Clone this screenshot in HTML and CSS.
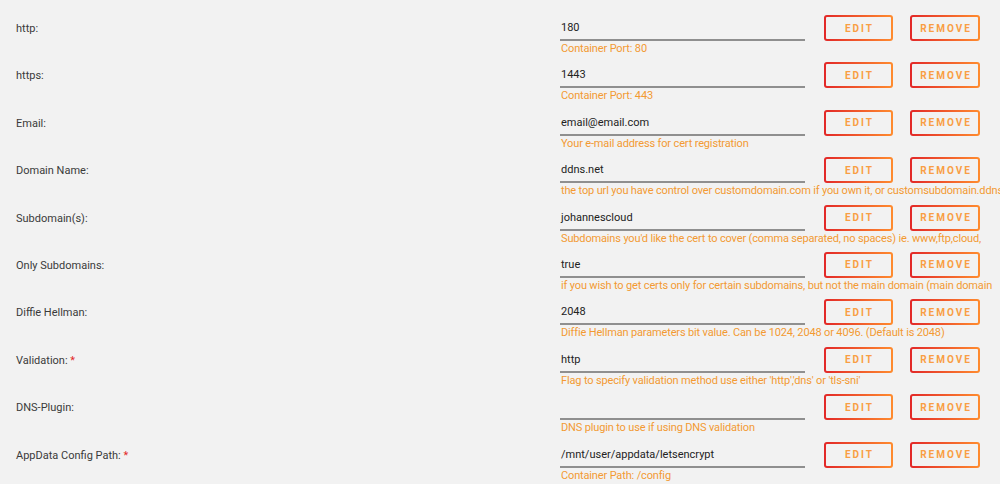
FILE: index.html
```html
<!DOCTYPE html>
<html lang="en">

<head>
  <meta charset="UTF-8" />
  <title>Container Settings</title>
  <link rel="stylesheet" href="styles.css">
</head>

<body>
  <div class="config-list">

    <div class="config-row">
      <div class="config-label">http:</div>
      <div class="config-field">
        <div class="config-value">180</div>
        <div class="config-help">Container Port: 80</div>
      </div>
      <button class="btn btn-edit">EDIT</button>
      <button class="btn btn-remove">REMOVE</button>
    </div>

    <div class="config-row">
      <div class="config-label">https:</div>
      <div class="config-field">
        <div class="config-value">1443</div>
        <div class="config-help">Container Port: 443</div>
      </div>
      <button class="btn btn-edit">EDIT</button>
      <button class="btn btn-remove">REMOVE</button>
    </div>

    <div class="config-row">
      <div class="config-label">Email:</div>
      <div class="config-field">
        <div class="config-value">email@email.com</div>
        <div class="config-help">Your e-mail address for cert registration</div>
      </div>
      <button class="btn btn-edit">EDIT</button>
      <button class="btn btn-remove">REMOVE</button>
    </div>

    <div class="config-row">
      <div class="config-label">Domain Name:</div>
      <div class="config-field">
        <div class="config-value">ddns.net</div>
        <div class="config-help">the top url you have control over customdomain.com if you own it, or customsubdomain.ddns</div>
      </div>
      <button class="btn btn-edit">EDIT</button>
      <button class="btn btn-remove">REMOVE</button>
    </div>

    <div class="config-row">
      <div class="config-label">Subdomain(s):</div>
      <div class="config-field">
        <div class="config-value">johannescloud</div>
        <div class="config-help">Subdomains you'd like the cert to cover (comma separated, no spaces) ie. www,ftp,cloud,</div>
      </div>
      <button class="btn btn-edit">EDIT</button>
      <button class="btn btn-remove">REMOVE</button>
    </div>

    <div class="config-row">
      <div class="config-label">Only Subdomains:</div>
      <div class="config-field">
        <div class="config-value">true</div>
        <div class="config-help">if you wish to get certs only for certain subdomains, but not the main domain (main domain</div>
      </div>
      <button class="btn btn-edit">EDIT</button>
      <button class="btn btn-remove">REMOVE</button>
    </div>

    <div class="config-row">
      <div class="config-label">Diffie Hellman:</div>
      <div class="config-field">
        <div class="config-value">2048</div>
        <div class="config-help">Diffie Hellman parameters bit value. Can be 1024, 2048 or 4096. (Default is 2048)</div>
      </div>
      <button class="btn btn-edit">EDIT</button>
      <button class="btn btn-remove">REMOVE</button>
    </div>

    <div class="config-row">
      <div class="config-label">Validation: <span class="required">*</span></div>
      <div class="config-field">
        <div class="config-value">http</div>
        <div class="config-help">Flag to specify validation method use either 'http','dns' or 'tls-sni'</div>
      </div>
      <button class="btn btn-edit">EDIT</button>
      <button class="btn btn-remove">REMOVE</button>
    </div>

    <div class="config-row">
      <div class="config-label">DNS-Plugin:</div>
      <div class="config-field">
        <div class="config-value"></div>
        <div class="config-help">DNS plugin to use if using DNS validation</div>
      </div>
      <button class="btn btn-edit">EDIT</button>
      <button class="btn btn-remove">REMOVE</button>
    </div>

    <div class="config-row">
      <div class="config-label">AppData Config Path: <span class="required">*</span></div>
      <div class="config-field">
        <div class="config-value">/mnt/user/appdata/letsencrypt</div>
        <div class="config-help">Container Path: /config</div>
      </div>
      <button class="btn btn-edit">EDIT</button>
      <button class="btn btn-remove">REMOVE</button>
    </div>

  </div>
</body>

</html>
```

FILE: styles.css
```css
* {
  box-sizing: border-box;
  margin: 0;
  padding: 0;
}

html,
body {
  height: 100%;
  overflow: hidden;
}

body {
  font-family: Roboto, 'Liberation Sans', Arial, sans-serif;
  font-size: 11px;
  background: #f2f2f2;
  color: #333;
}

.config-list {
  padding: 15px 0 0 16px;
}

.config-row {
  display: flex;
  align-items: flex-start;
  height: 47.4px;
}

.config-label {
  width: 544px;
  flex-shrink: 0;
  padding-top: 2px;
  line-height: 24px;
  color: #3a3a3a;
}

.required {
  color: #e22828;
}

.config-field {
  width: 245px;
  flex-shrink: 0;
  margin-right: 19px;
}

.config-value {
  height: 26px;
  padding: 1px 0 0 1px;
  line-height: 23px;
  color: #222;
  border-bottom: 2px solid #8f8f8f;
}

.config-help {
  padding: 1px 0 0 1px;
  line-height: 13px;
  letter-spacing: -0.15px;
  color: #f39a32;
  white-space: nowrap;
}

/* gradient outline buttons */
.btn {
  height: 26px;
  border: 2px solid transparent;
  border-radius: 3px;
  background:
    linear-gradient(#f2f2f2, #f2f2f2) padding-box,
    linear-gradient(90deg, #e22828, #ff8c2f) border-box;
  color: #f99e44;
  font-family: inherit;
  font-size: 10px;
  font-weight: 700;
  letter-spacing: 2px;
  text-indent: 2px;
  cursor: pointer;
  flex-shrink: 0;
}

.btn-edit {
  width: 69px;
  margin-right: 17px;
}

.btn-remove {
  width: 70px;
}
```
